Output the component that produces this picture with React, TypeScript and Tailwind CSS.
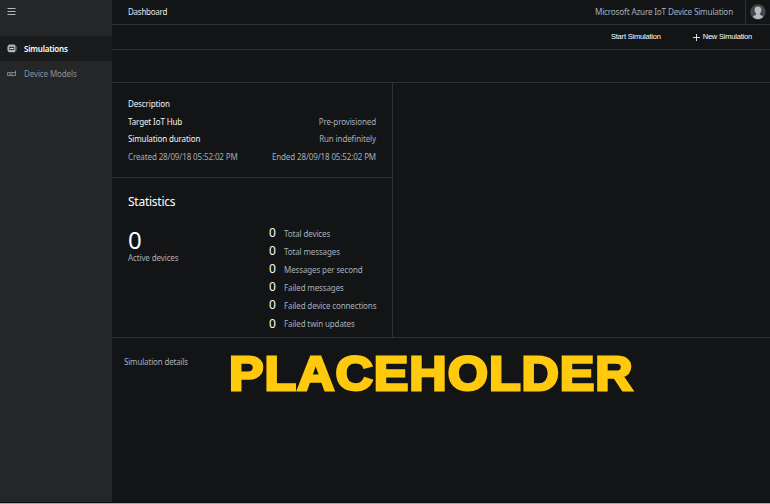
import React from "react";

const stats = ["Total devices", "Total messages", "Messages per second", "Failed messages", "Failed device connections", "Failed twin updates"];

function Row({ left, right, bright = true }: { left: string; right?: string; bright?: boolean }) {
  return (
    <div className="flex h-[17.6px] items-center justify-between">
      <span className={bright ? "text-[#f4f4f4]" : "text-[#a5adb5]"}>{left}</span>
      <span className="text-[#a5b0ba]">{right}</span>
    </div>
  );
}

export default function App() {
  return (
    <div className="flex h-[504px] w-[770px] flex-col overflow-hidden bg-[#131416] font-['Noto_Sans',sans-serif] text-[8px] leading-none tracking-[-0.12px] whitespace-nowrap text-[#a5b0ba]">
      <div className="flex h-[503px] border-b border-[#050b11]">
        <aside className="w-28 shrink-0 bg-[#252628]">
          <div className="h-9 pt-2 pl-[7px]">
            <svg width="9" height="8" viewBox="0 0 9 8" stroke="#b2bac0" strokeWidth="1">
              <path d="M.5 .5h8M.5 3.5h8M.5 6.5h8" />
            </svg>
          </div>
          <div className="flex h-[25px] items-center bg-[#1a1b1d] pl-[7px] font-semibold tracking-[-0.2px] text-white">
            <svg width="10" height="9" viewBox="0 0 10 9" fill="none">
              <rect x="1" y=".5" width="7.5" height="7.8" rx="1.6" fill="#b0b3b5" />
              <path d="M.4 2.2v4.5M9.1 2.2v4.5" stroke="#777b7e" />
              <rect x="2.2" y="2.8" width="5" height="3.2" fill="#303234" />
              <path d="M2.8 4.5h3.8" stroke="#d8dadb" />
            </svg>
            <span className="ml-[7px] pt-px">Simulations</span>
          </div>
          <div className="flex h-[25px] items-center pl-[7px] text-[#89929b]">
            <svg width="10" height="8" viewBox="0 0 10 8" fill="none" stroke="#89929b" strokeWidth=".9">
              <path d="M8.5 .6v5H.6v-3h7.9M2 4.1h4" />
            </svg>
            <span className="ml-[7px]">Device Models</span>
          </div>
        </aside>
        <main className="flex min-w-0 flex-1 flex-col">
          <header className="flex h-[25px] shrink-0 items-center border-b border-[#303133] pl-4">
            <span className="tracking-[-0.25px] text-[#e6e8ea]">Dashboard</span>
            <span className="mr-[12px] ml-auto pt-px text-[8.2px] tracking-[-0.2px]">Microsoft Azure IoT Device Simulation</span>
            <div className="flex h-full w-[25px] items-center justify-center border-l border-[#303133]">
              <svg width="16" height="16" viewBox="0 0 16 16">
                <circle cx="8" cy="8" r="7.7" fill="#44474c" />
                <path d="M8 2.5c-2.4 0-3.6 1.6-3.4 3.8.1 1.6.9 2.8 1.6 3.4v1L3.3 12v1.3C6 15.7 10 15.7 12.7 13.3V12l-2.9-1.3v-1c.8-.6 1.5-1.8 1.6-3.4C11.6 4.1 10.4 2.5 8 2.5z" fill="#b4bec6" />
              </svg>
            </div>
          </header>
          <div className="flex h-[25px] shrink-0 items-center justify-end border-b border-[#303133] pr-[18px] font-['Liberation_Sans',sans-serif] text-[7.5px] tracking-[-0.2px] text-white">
            <span>Start Simulation</span>
            <svg className="ml-8 mr-[3px]" width="7" height="7" viewBox="0 0 7 7" stroke="#eee" strokeWidth=".9">
              <path d="M3.5 0v7M0 3.5h7" />
            </svg>
            <span>New Simulation</span>
          </div>
          <div className="h-[33px] shrink-0 border-b border-[#303133]" />
          <div className="flex h-[255px] shrink-0 border-b border-[#303133]">
            <div className="w-[281px] border-r border-[#303133]">
              <section className="h-[95px] border-b border-[#303133] pt-[12.4px] pr-4 pl-4">
                <Row left="Description" />
                <Row left="Target IoT Hub" right="Pre-provisioned" />
                <Row left="Simulation duration" right="Run indefinitely" />
                <Row left="Created 28/09/18 05:52:02 PM" right="Ended 28/09/18 05:52:02 PM" bright={false} />
              </section>
              <section className="pl-4">
                <h2 className="pt-[18px] text-[12px] tracking-[-0.25px] text-white">Statistics</h2>
                <div className="flex">
                  <div className="w-[141px] pt-[20px]">
                    <div className="text-[24px] text-white">0</div>
                    <div className="mt-[2px]">Active devices</div>
                  </div>
                  <div className="pt-[16px]">
                    {stats.map((s) => (
                      <div key={s} className="flex h-[18.1px] items-center">
                        <span className="w-[15px] text-[12px] text-white">0</span>
                        <span className="pt-[1.5px] tracking-[-0.13px]">{s}</span>
                      </div>
                    ))}
                  </div>
                </div>
              </section>
            </div>
          </div>
          <section className="flex pl-3">
            <span className="w-[105px] pt-[20px] tracking-[-0.17px]">Simulation details</span>
            <span className="origin-left scale-x-[1.07] pt-[11px] font-['Liberation_Sans',sans-serif] text-[48.4px] font-bold tracking-[0.9px] text-[#ffc90e] [-webkit-text-stroke:2.8px_#ffc90e]">PLACEHOLDER</span>
          </section>
        </main>
      </div>
      <div className="h-px bg-[#a5a7a9]" />
    </div>
  );
}
